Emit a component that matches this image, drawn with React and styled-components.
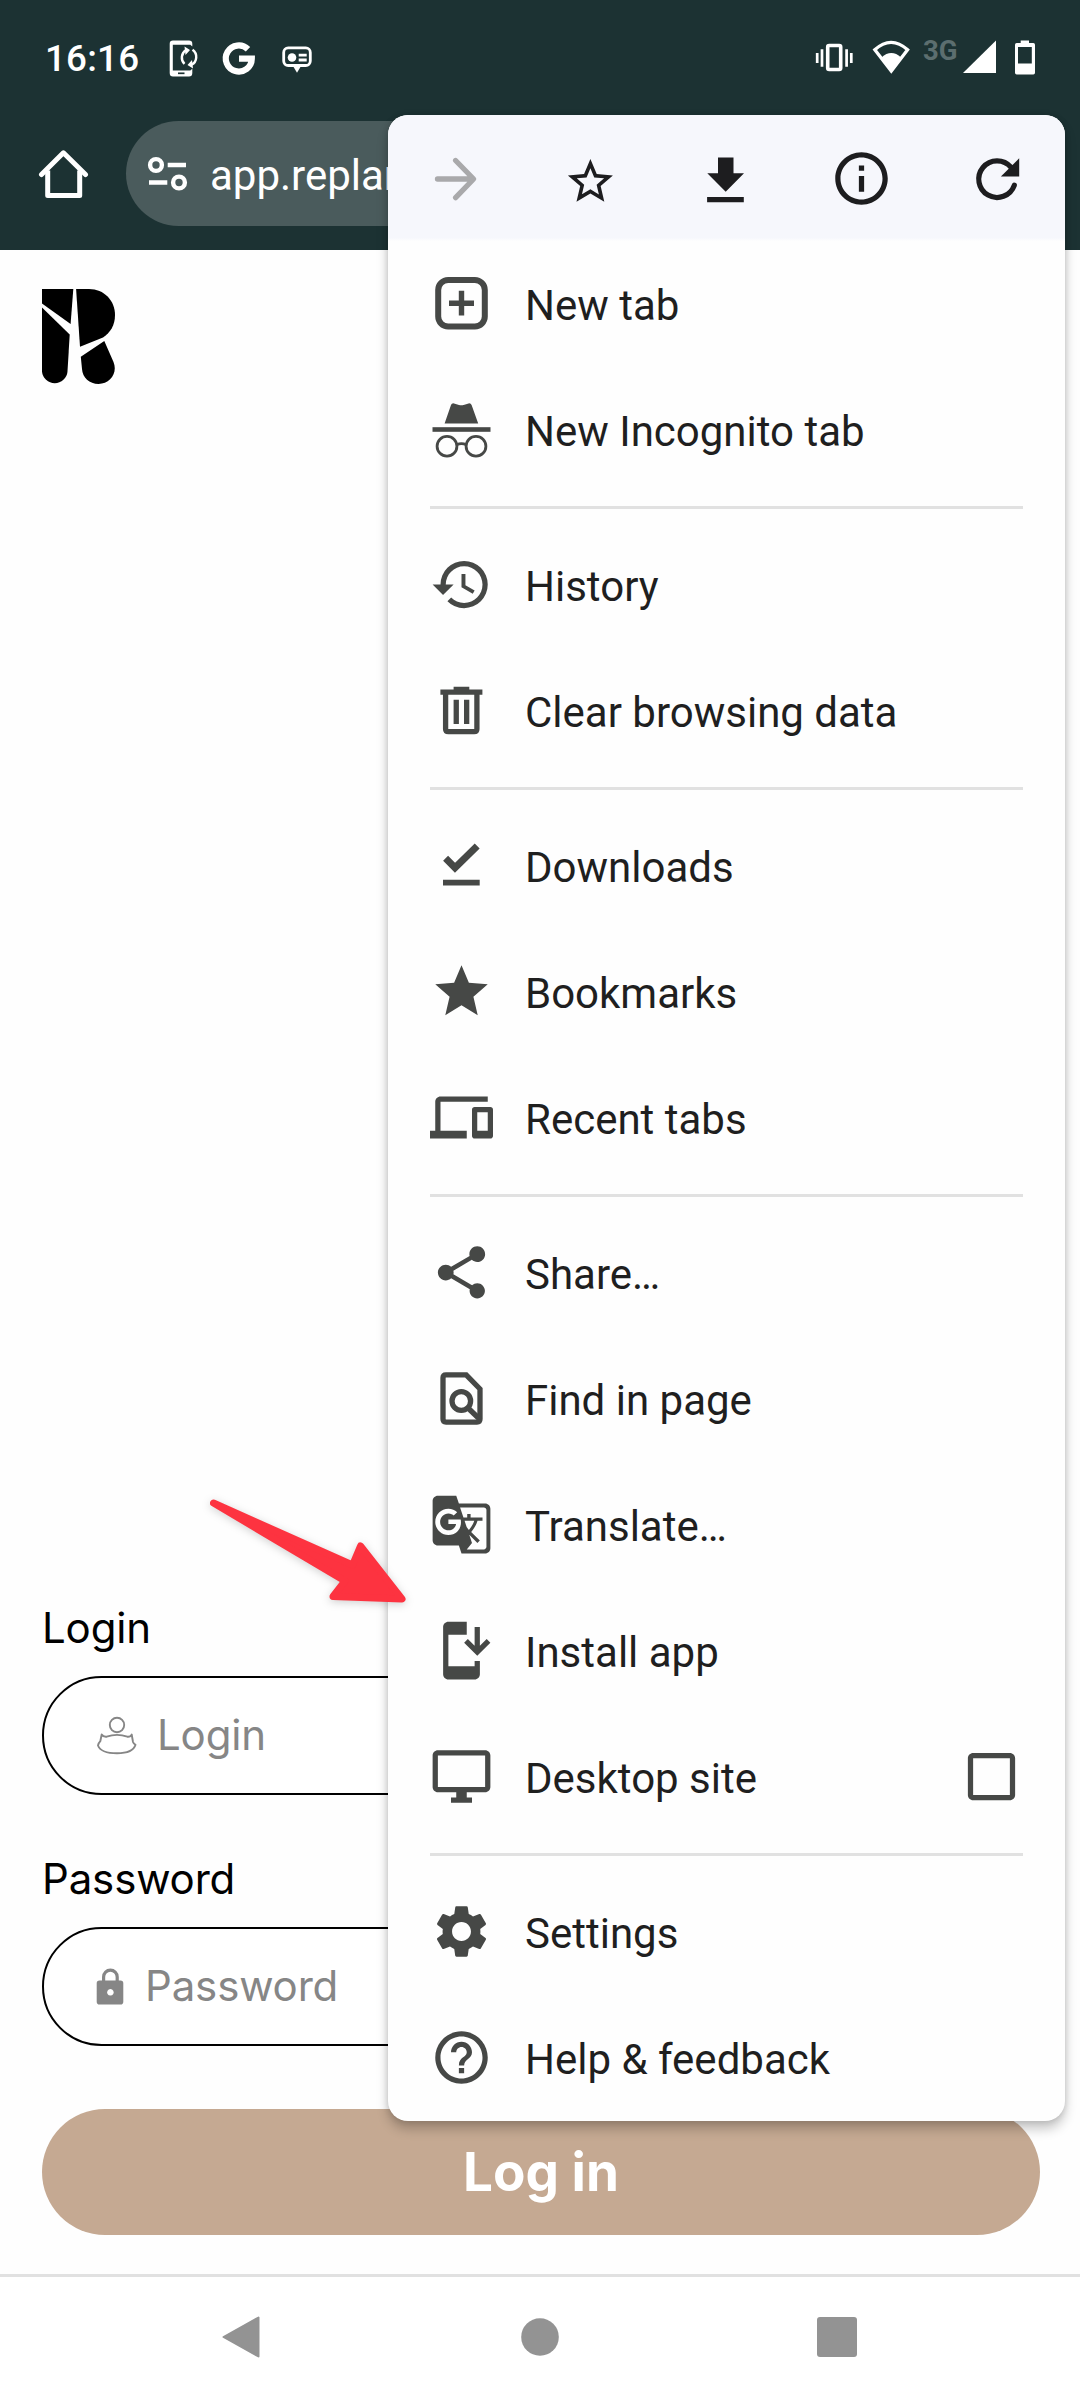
import React from "react";
import styled, { createGlobalStyle } from "styled-components";
import {
  MdHistory,
  MdStar,
  MdDevices,
  MdShare,
  MdGTranslate,
  MdInstallMobile,
  MdOutlineDesktopWindows,
  MdSettings,
  MdHelpOutline,
  MdInfoOutline,
  MdCheckBoxOutlineBlank,
} from "react-icons/md";

const GlobalStyle = createGlobalStyle`
  * { box-sizing: border-box; }
  body { margin: 0; background: #fff; }
`;

const Screen = styled.div`
  position: relative;
  width: 1080px;
  height: 2400px;
  display: flex;
  flex-direction: column;
  overflow: hidden;
  background: #fefefe;
  font-family: Roboto, "Liberation Sans", sans-serif;
`;

/* Browser chrome */
const Header = styled.header`
  height: 250px;
  flex: none;
  background: #1c3233;
  color: #fff;
`;

const StatusBar = styled.div`
  height: 115px;
  padding: 0 44px 0 45px;
  display: flex;
  align-items: center;
  justify-content: space-between;
`;

const StatusGroup = styled.div`
  display: flex;
  align-items: center;
  gap: ${(p) => p.$gap}px;
`;

const Clock = styled.span`
  width: 102px;
  padding-top: 3px;
  font-size: 36.75px;
  font-weight: 500;
  line-height: 44px;
  letter-spacing: 0.2px;
`;

const Network = styled.span`
  width: 36px;
  margin: 0 4px 0 11px;
  padding-bottom: 13px;
  font-size: 27.5px;
  font-weight: 700;
  line-height: 32px;
  color: #5c6e6f;
`;

const Glyph = styled.svg`
  display: block;
  flex: none;
  width: ${(p) => p.$w}px;
  height: ${(p) => p.$h}px;
`;

const AddressRow = styled.div`
  display: flex;
  align-items: center;
  gap: 37px;
  padding: 6px 0 0 38px;
`;

const UrlPill = styled.div`
  display: flex;
  align-items: center;
  gap: 21px;
  width: 640px;
  height: 105px;
  padding-left: 21px;
  border-radius: 53px;
  background: #4a5b5c;
`;

const UrlText = styled.span`
  padding-top: 4px;
  font-size: 42px;
  line-height: 50px;
`;

/* Web page */
const Page = styled.main`
  flex: 1;
  display: flex;
  flex-direction: column;
  justify-content: space-between;
  padding: 39px 40px 39px 42px;
  font-family: Inter, "Liberation Sans", sans-serif;
`;

const Form = styled.form`
  display: flex;
  flex-direction: column;
`;

const Label = styled.label`
  height: 73px;
  font-size: 42px;
  line-height: 50px;
  letter-spacing: -0.15px;
  color: #000;
`;

const Field = styled.div`
  display: flex;
  align-items: center;
  gap: ${(p) => p.$gap}px;
  height: 119px;
  margin-bottom: 59px;
  padding: 0 52px;
  border: 2px solid #000;
  border-radius: 60px;
  background: #fff;
`;

const Placeholder = styled.span`
  padding-bottom: 1px;
  font-size: 42px;
  line-height: 50px;
  letter-spacing: -0.15px;
  color: #868686;
`;

const SubmitButton = styled.button`
  height: 126px;
  margin-top: 4px;
  padding: 0 0 1px;
  border: 0;
  border-radius: 63px;
  background: #c5a992;
  color: #fff;
  font: 700 53px/64px Inter, "Liberation Sans", sans-serif;
`;

/* System navigation */
const NavBar = styled.nav`
  flex: none;
  height: 126px;
  display: flex;
  justify-content: center;
  gap: 255px;
  padding-top: 39px;
  border-top: 3px solid #e1e1e1;
  background: #fff;
`;

/* Overflow menu */
const Menu = styled.div`
  position: absolute;
  top: 115px;
  left: 388px;
  width: 677px;
  height: 2006px;
  border-radius: 20px;
  background: #fefefe;
  box-shadow: 0 8px 12px rgba(0, 0, 0, 0.22), 0 0 6px rgba(0, 0, 0, 0.14);
`;

const Toolbar = styled.div`
  height: 126px;
  display: flex;
  border-radius: 20px 20px 0 0;
  background: linear-gradient(#f6f7fc 0 123px, #fefefe 126px);
`;

const ToolButton = styled.div`
  flex: 1;
  display: flex;
  align-items: center;
  justify-content: center;
  font-size: 63px;
  color: ${(p) => (p.$disabled ? "#a9a9ab" : "#1d1d1f")};
`;

const Item = styled.div`
  height: 126px;
  display: flex;
  align-items: center;
  padding: 0 42px;
`;

const ItemIcon = styled.span`
  display: flex;
  padding-bottom: 1px;
  font-size: 63px;
  margin-right: ${(p) => (p.$trailing ? 0 : 32)}px;
  color: #464846;
`;

const ItemText = styled.span`
  flex: 1;
  padding-top: 3px;
  font-size: 42px;
  line-height: 50px;
  color: #1f1f1f;
`;

const Divider = styled.div`
  height: 3px;
  margin: 13px 42px;
  background: #e1e1e1;
`;

const Pointer = styled.svg`
  position: absolute;
  left: 200px;
  top: 1490px;
  width: 220px;
  height: 130px;
  filter: drop-shadow(0 2px 4px rgba(0, 0, 0, 0.18));
`;

const Icon63 = ({ children }) => (
  <Glyph $w={63} $h={63} viewBox="0 0 63 63" fill="currentColor">
    {children}
  </Glyph>
);

const NewTabIcon = () => (
  <Icon63>
    <rect x="8.2" y="8" width="46.6" height="46.6" rx="10" fill="none" stroke="currentColor" strokeWidth="6" />
    <path d="M28.8 18.8h5.4v9.7H44v5.4h-9.8v9.7h-5.4v-9.7H19v-5.4h9.8z" />
  </Icon63>
);

const IncognitoIcon = () => (
  <Icon63>
    <path d="M14.6 25.5 21 7q.8-2 3-1.6l5 1.6q2.3.6 4.6 0l5-1.6q2.2-.4 3 1.6l6.6 18.5z" />
    <rect x="2.5" y="29.2" width="58" height="4.6" />
    <g fill="none" stroke="currentColor" strokeWidth="2.8">
      <circle cx="17" cy="48.2" r="9.9" />
      <circle cx="46" cy="48.2" r="9.9" />
      <path d="M26.8 46.8q4.7-2.4 9.4 0" />
    </g>
  </Icon63>
);

const TrashIcon = () => (
  <Icon63>
    <path d="M23.6 7.800h15.7v2.8h13.1v5.2h-42v-5.2h13.2z" />
    <path d="M15.6 14v36q0 2.7 2.7 2.7h25.9q2.7 0 2.7-2.7V14" fill="none" stroke="currentColor" strokeWidth="5.3" />
    <path d="M23.6 20.7h5.3V45h-5.3zM34 20.7h5.3V45H34z" />
  </Icon63>
);

const DownloadsIcon = () => (
  <Icon63>
    <path d="M15.6 24.3 25 33.800 47.2 12" fill="none" stroke="currentColor" strokeWidth="7" />
    <path d="M13 45.8h36.7v5.6H13z" />
  </Icon63>
);

const FindIcon = () => (
  <Icon63>
    <g fill="none" stroke="currentColor" strokeWidth="5.3">
      <path d="M36.2 7.8H16q-3 0-3 3v41.3q0 3 3 3h31q3 0 3-3V22z" />
      <circle cx="31.3" cy="34" r="9.3" />
      <path d="M37.5 40.5 50 52.5" />
    </g>
  </Icon63>
);

const ForwardIcon = () => (
  <Icon63>
    <path d="M13.5 32H49M31.6 13.5 49.6 32 31.6 50.7" fill="none" stroke="currentColor" strokeWidth="5.3" strokeLinecap="round" strokeLinejoin="round" />
  </Icon63>
);

const StarOutlineIcon = () => (
  <Icon63>
    <path
      transform="translate(3.4 7.6) scale(2.25)"
      d="M22 9.24l-7.19-.62L12 2 9.19 8.63 2 9.24l5.46 4.73L5.82 21 12 17.27 18.18 21l-1.63-7.03zM12 15.4l-3.76 2.27 1-4.28-3.32-2.88 4.38-.38L12 6.1l1.71 4.04 4.38.38-3.32 2.88 1 4.28z"
    />
  </Icon63>
);

const SaveIcon = () => (
  <Icon63>
    <path d="M23 10.5h15.5v15.8H49L30.7 44.7 12.3 26.300H23zM12.100 50h36.700v5.200H12.100z" />
  </Icon63>
);

const ReloadIcon = () => (
  <Icon63>
    <path d="M45 20.3A18.3 18.3 0 1 0 48.3 38.3" fill="none" stroke="currentColor" strokeWidth="5.2" strokeLinecap="round" />
    <path d="M53.2 11.2v18.3H34.9z" />
  </Icon63>
);

const toolbar = [
  { id: "forward", icon: <ForwardIcon />, disabled: true },
  { id: "bookmark", icon: <StarOutlineIcon /> },
  { id: "save", icon: <SaveIcon /> },
  { id: "info", icon: <MdInfoOutline /> },
  { id: "reload", icon: <ReloadIcon /> },
];

const sections = [
  [
    { label: "New tab", icon: <NewTabIcon /> },
    { label: "New Incognito tab", icon: <IncognitoIcon /> },
  ],
  [
    { label: "History", icon: <MdHistory /> },
    { label: "Clear browsing data", icon: <TrashIcon /> },
  ],
  [
    { label: "Downloads", icon: <DownloadsIcon /> },
    { label: "Bookmarks", icon: <MdStar /> },
    { label: "Recent tabs", icon: <MdDevices /> },
  ],
  [
    { label: "Share…", icon: <MdShare /> },
    { label: "Find in page", icon: <FindIcon /> },
    { label: "Translate…", icon: <MdGTranslate /> },
    { label: "Install app", icon: <MdInstallMobile /> },
    { label: "Desktop site", icon: <MdOutlineDesktopWindows />, checkbox: true },
  ],
  [
    { label: "Settings", icon: <MdSettings /> },
    { label: "Help & feedback", icon: <MdHelpOutline /> },
  ],
];

const BrowserHeader = () => (
  <Header>
    <StatusBar>
      <StatusGroup $gap={16}>
        <Clock>16:16</Clock>
        <Glyph $w={40} $h={48} viewBox="0 0 40 48" fill="#fff">
          <path d="M10 6.5h16q3.300 0 3.300 3.300V12.500l-2-1.700H9.800v25.600h17.500l2-1.700V39q0 3.500-3.300 3.500H10q-3.300 0-3.300-3.500V9.800q0-3.300 3.300-3.300z" />
          <path d="M15 39.300h6.500" stroke="#1c3233" strokeWidth="1.7" />
          <path d="M21.500 29.800A8.800 8.800 0 0 1 23 16M29.500 15.800A8.800 8.800 0 0 1 28.500 30.800" fill="none" stroke="#fff" strokeWidth="2.4" />
          <path d="M21.500 12.500 27 16l-4.500 5zM30 34.500l-5.500-3.500 4.500-5z" />
        </Glyph>
        <Glyph $w={40} $h={48} viewBox="0 0 40 48" fill="none" stroke="#fff" strokeWidth="6.2">
          <path d="M29 15.3A13 13 0 1 0 32.8 24.7H20" />
        </Glyph>
        <Glyph $w={40} $h={48} viewBox="0 0 40 48" fill="#fff">
          <rect x="8.7" y="13.9" width="26.6" height="17.6" rx="4.5" fill="none" stroke="#fff" strokeWidth="2.8" />
          <path d="M18 32h8l-4 6.8z" />
          <circle cx="17" cy="23.5" r="4.3" />
          <path d="M23.700 21.100h8M23.700 26h8" stroke="#fff" strokeWidth="2.8" />
        </Glyph>
      </StatusGroup>
      <StatusGroup $gap={0}>
        <Glyph $w={57} $h={48} viewBox="0 0 57 48" fill="none" stroke="#fff">
          <rect x="13.700" y="11.500" width="13" height="24" rx="1.5" strokeWidth="3.6" />
          <path d="M3.200 19v10M8 15.200v17.600M32.600 15.200v17.600M37.300 19v10" strokeWidth="2.7" />
        </Glyph>
        <Glyph $w={41} $h={48} viewBox="0 0 41 48" fill="#fff">
          <path d="M3.8 15.8Q20 1 36.6 15.8L20.3 37z" fill="none" stroke="#fff" strokeWidth="3.3" />
          <path d="M10.500 23.500q9.800-8.800 19.600 0L20.300 38.500z" />
        </Glyph>
        <Network>3G</Network>
        <Glyph $w={51} $h={48} viewBox="0 0 51 48" fill="#fff">
          <path d="M33 6.5V39H0z" />
        </Glyph>
        <Glyph $w={22} $h={48} viewBox="0 0 22 48" fill="#fff" fillRule="evenodd">
          <path d="M6.7 6.5H15V9h4.300q1.700 0 1.700 1.700v28.100q0 1.700-1.700 1.700H2.700Q1 40.500 1 38.800V10.700Q1 9 2.700 9h4zM4 13v16.500h13.800V13z" />
        </Glyph>
      </StatusGroup>
    </StatusBar>
    <AddressRow>
      <Glyph $w={51} $h={52} viewBox="0 0 51 52" fill="none" stroke="#fff" strokeWidth="5" strokeLinejoin="round">
        <path d="M3.5 26.500 25.4 4.800 47.5 26.500" strokeLinecap="round" />
        <path d="M9.7 22.500v25h32v-25" />
      </Glyph>
      <UrlPill>
        <Glyph $w={42} $h={42} viewBox="0 0 42 42" fill="none" stroke="#fff" strokeWidth="4.4">
          <circle cx="9" cy="12" r="5.9" />
          <path d="M20.7 12H39M2 29.500h18.300" />
          <circle cx="32" cy="29.5" r="5.9" />
        </Glyph>
        <UrlText>app.replant</UrlText>
      </UrlPill>
    </AddressRow>
  </Header>
);

const LoginPage = () => (
  <Page>
    <Glyph $w={73} $h={95} viewBox="0 0 73 95" fill="#000">
      <path d="M0 0h31.3l-2.700 35L0 14.500z" />
      <path d="M0 18.600 27.700 45.600 25.500 82.500A12.800 12.800 0 0 1 0 82.500z" />
      <path d="M34.100 0H47C62 0 73 11.500 73 26 73 36 68.500 43.500 61 48.500L38 57.700z" />
      <path d="M62.300 52 71.500 73C76 84 68 95 56.500 95 47.500 95 40.500 88.500 40 80L38.800 67.700z" />
    </Glyph>
    <Form>
      <Label>Login</Label>
      <Field $gap={19}>
        <Glyph $w={42} $h={42} viewBox="0 0 42 42" fill="none" stroke="#868686" strokeWidth="1.9" strokeLinejoin="round">
          <circle cx="21" cy="10" r="7.2" />
          <path d="M5.7 19.500q1.600 2.600 5 2.200 10.300-3.600 20.600 0 3.300.4 4.400-2.200l1.300 7.500q.5 1.500 2.500 2.800-2.500 8.500-18.500 8.500T2 30.500q.3-2.200 2.300-4.300z" />
        </Glyph>
        <Placeholder>Login</Placeholder>
      </Field>
      <Label>Password</Label>
      <Field $gap={19}>
        <Glyph $w={30} $h={42} viewBox="0 0 30 42" fill="#868686" fillRule="evenodd">
          <path d="M3.5 14.500h21q2.800 0 2.800 2.800v18.400q0 2.800-2.800 2.800h-21Q.7 38.500.7 35.700V17.300Q.7 14.500 3.500 14.500zM14.400 23a3.300 3.300 0 1 0 .01 0z" />
          <path d="M7.6 16v-5a6.800 6.800 0 0 1 13.600 0V16" fill="none" stroke="#868686" strokeWidth="3.200" />
        </Glyph>
        <Placeholder>Password</Placeholder>
      </Field>
      <SubmitButton type="button">Log in</SubmitButton>
    </Form>
  </Page>
);

const OverflowMenu = () => (
  <Menu>
    <Toolbar>
      {toolbar.map((t) => (
        <ToolButton key={t.id} $disabled={t.disabled}>
          {t.icon}
        </ToolButton>
      ))}
    </Toolbar>
    {sections.map((items, i) => (
      <React.Fragment key={items[0].label}>
        {i > 0 && <Divider />}
        {items.map((item) => (
          <Item key={item.label}>
            <ItemIcon>{item.icon}</ItemIcon>
            <ItemText>{item.label}</ItemText>
            {item.checkbox && (
              <ItemIcon $trailing>
                <MdCheckBoxOutlineBlank />
              </ItemIcon>
            )}
          </Item>
        ))}
      </React.Fragment>
    ))}
  </Menu>
);

export default function App() {
  return (
    <>
      <GlobalStyle />
      <Screen>
        <BrowserHeader />
        <LoginPage />
        <NavBar>
          <Glyph $w={42} $h={42} viewBox="0 0 42 42" fill="#939393">
            <path d="M36.5 1.500v39L1.500 21z" stroke="#939393" strokeWidth="2" strokeLinejoin="round" />
          </Glyph>
          <Glyph $w={42} $h={42} viewBox="0 0 42 42" fill="#939393">
            <circle cx="21" cy="21" r="18.8" />
          </Glyph>
          <Glyph $w={42} $h={42} viewBox="0 0 42 42" fill="#939393">
            <rect x="1" y="1" width="40" height="40" rx="3" />
          </Glyph>
        </NavBar>
        <OverflowMenu />
        <Pointer viewBox="0 0 220 130" fill="#fd3340" stroke="#fd3340" strokeWidth="7" strokeLinejoin="round">
          <path d="M13.5 13 152.500 75 160.500 56 202 109 133 106.500 145 91z" />
        </Pointer>
      </Screen>
    </>
  );
}
